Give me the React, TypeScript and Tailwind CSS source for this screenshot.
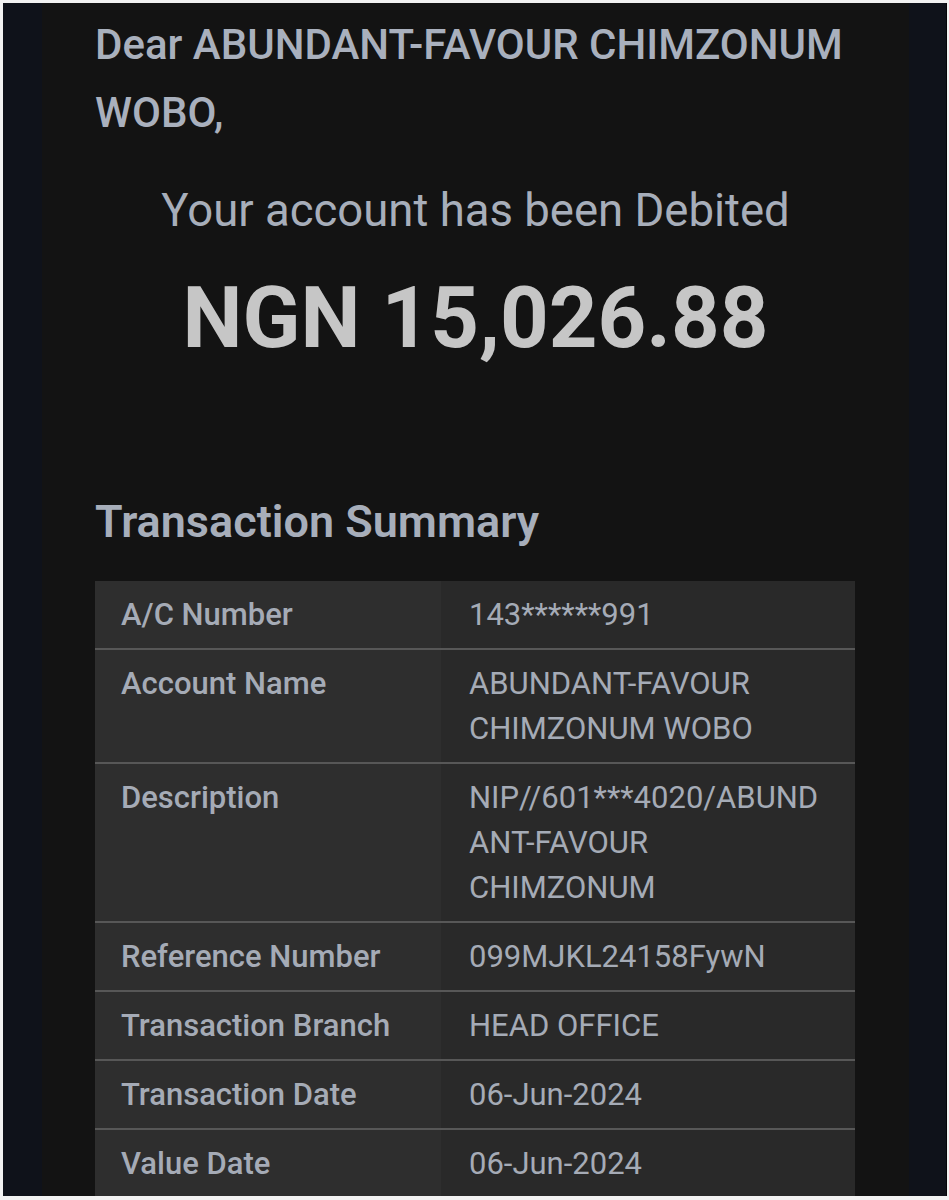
const rows: { label: string; value: string }[] = [
  { label: "A/C Number", value: "143******991" },
  { label: "Account Name", value: "ABUNDANT-FAVOUR CHIMZONUM WOBO" },
  { label: "Description", value: "NIP//601***4020/ABUNDANT-FAVOUR CHIMZONUM" },
  { label: "Reference Number", value: "099MJKL24158FywN" },
  { label: "Transaction Branch", value: "HEAD OFFICE" },
  { label: "Transaction Date", value: "06-Jun-2024" },
  { label: "Value Date", value: "06-Jun-2024" },
];

const App = () => {
  return (
    <div className="w-[949px] h-[1200px] bg-[#f2f2f2] pt-[3px] pl-[3px] pr-[2px] pb-[4px] overflow-hidden font-['Roboto',sans-serif]">
      <div className="h-full bg-[#0f121a] border-r border-[#050608] pl-[39px] pr-[37px]">
        <div className="h-full bg-[#131313] px-[53px] pt-[8px] overflow-hidden">
          <p className="text-[42px] leading-[68px] font-medium text-[#a9b0bd]">
            Dear ABUNDANT-FAVOUR CHIMZONUM WOBO,
          </p>

          <p className="mt-[32px] text-center text-[45.5px] leading-[64px] text-[#a7aeba]">
            Your account has been Debited
          </p>

          <p className="mt-[25px] text-center text-[85px] leading-[100px] font-bold text-[#c6c6c6]">
            NGN 15,026.88
          </p>

          <h2 className="mt-[124px] text-[45px] leading-[60px] font-semibold text-[#a7aeba]">
            Transaction Summary
          </h2>

          <div className="mt-[29px] w-[760px]">
            {rows.map((row, idx) => (
              <div
                key={row.label}
                className={`flex text-[31px] leading-[45px] text-[#a5abb6] ${
                  idx > 0 ? "border-t-2 border-[#575757]" : ""
                }`}
              >
                <div className="w-[346px] shrink-0 bg-[#2e2e2e] pl-[26px] pr-3 py-[11px] font-medium">
                  {row.label}
                </div>
                <div className="w-[414px] min-w-0 bg-[#292929] pl-[28px] pr-[28px] py-[11px] break-words">
                  {row.value}
                </div>
              </div>
            ))}
          </div>
        </div>
      </div>
    </div>
  );
};

export default App;
